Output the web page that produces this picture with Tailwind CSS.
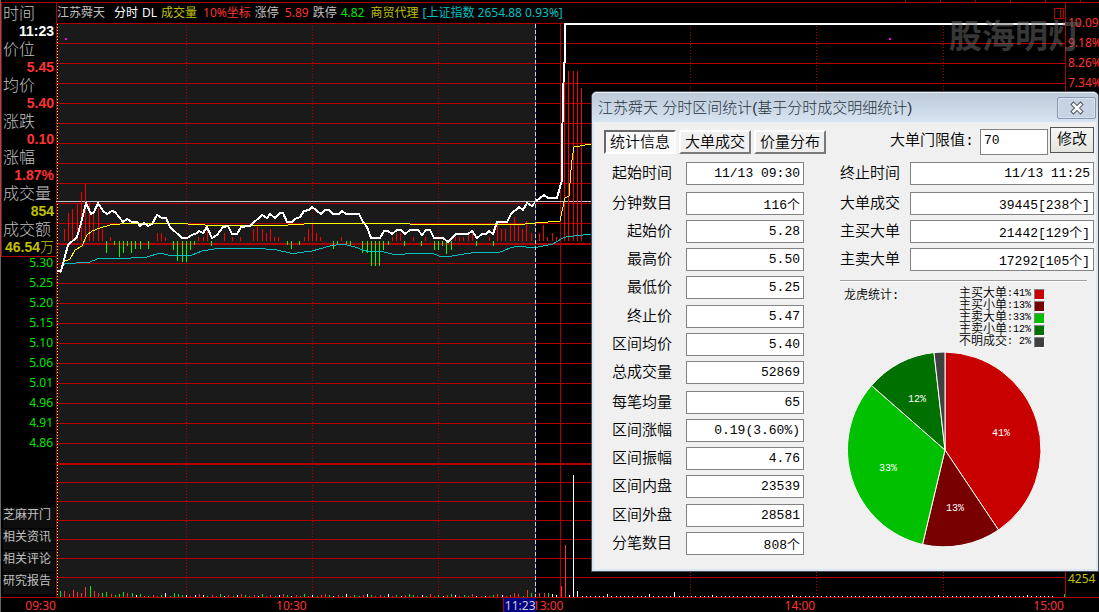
<!DOCTYPE html>
<html lang="zh-CN">
<head>
<meta charset="utf-8">
<title>江苏舜天 分时</title>
<script src="https://cdn.jsdelivr.net/npm/@tailwindcss/browser@4"></script>
</head>
<body class="relative flex min-h-screen flex-col overflow-hidden border-l border-[#666666] bg-black font-['Noto_Sans','Noto_Sans_CJK_SC',sans-serif] text-xs">

<div class="flex h-[3px] shrink-0 justify-end border-b border-[#b00000] pr-[18px]">
  <div class="flex h-[2px] gap-[34px]" aria-hidden="true">
    <i class="w-px bg-[#b00000]"></i><i class="w-px bg-[#b00000]"></i><i class="w-px bg-[#b00000]"></i><i class="w-px bg-[#b00000]"></i><i class="w-px bg-[#b00000]"></i><i class="w-px bg-[#b00000]"></i>
  </div>
</div>

<main class="flex flex-1">
  <aside class="flex w-[55px] shrink-0 flex-col">
    <dl class="-mr-px border-x border-b border-[#b00000] pt-px pr-0.5 pl-px text-[16px] leading-[18px] font-light text-[#c0c0c0] [&_dd]:text-right [&_dd]:font-['Liberation_Sans','Noto_Sans_CJK_SC',sans-serif] [&_dd]:text-[14px] [&_dd]:font-bold">
      <dt>时间</dt><dd class="text-white">11:23</dd>
      <dt>价位</dt><dd class="text-[#ff3232]">5.45</dd>
      <dt>均价</dt><dd class="text-[#ff3232]">5.40</dd>
      <dt>涨跌</dt><dd class="text-[#ff3232]">0.10</dd>
      <dt>涨幅</dt><dd class="text-[#ff3232]">1.87%</dd>
      <dt>成交量</dt><dd class="text-[#c0c000]">854</dd>
      <dt>成交额</dt><dd class="whitespace-nowrap text-[#c0c000]">46.54<span class="font-light">万</span></dd>
    </dl>
    <ul class="-mt-1 pr-[3px] text-right leading-5 text-[#00e600]">
      <li>5.30</li><li>5.25</li><li>5.20</li><li>5.15</li><li>5.10</li><li>5.06</li><li>5.01</li><li>4.96</li><li>4.91</li><li>4.86</li>
    </ul>
    <nav class="mt-auto flex flex-col gap-px pr-px pb-[3px] pl-0.5 text-[#c0c0c0] [&_a]:h-[21px] [&_a]:bg-[#0e0e0e] [&_a]:leading-4">
      <a href="#">芝麻开门</a><a href="#">相关资讯</a><a href="#">相关评论</a><a href="#">研究报告</a>
    </nav>
  </aside>

  <section class="flex min-w-0 flex-1 flex-col">
    <header class="flex h-5 items-center pr-px pl-px leading-5 whitespace-nowrap">
      <h1 class="mr-[9px] text-[#c0c0c0]">江苏舜天</h1>
      <div class="flex gap-1.5 [&>div]:flex [&>div]:gap-1">
        <div><span class="text-white">分时</span><span class="text-white">DL</span><span class="text-[#c0c000]">成交量</span></div>
        <div><span class="text-[#ff3232]">10%坐标</span><span class="text-[#c0c0c0]">涨停</span></div>
        <div><span class="text-[#ff3232]">5.89</span><span class="text-[#c0c0c0]">跌停</span><span class="text-[#00e600]">4.82</span></div>
        <div><span class="text-[#c0c000]">商贸代理</span><span class="text-[#00c0c0]">[上证指数 2654.88 0.93%]</span></div>
      </div>
      <svg class="ml-auto h-[11px] w-[10px]" viewBox="0 0 10 11" fill="none" stroke="#b00000" shape-rendering="crispEdges"><path d="M.5 .5h9v10h-9zM6.5 .5v10"/></svg>
    </header>
    <div class="min-h-0 flex-1">
      <svg class="block h-full w-full" viewBox="56 23 1009 574" preserveAspectRatio="none" fill="none" shape-rendering="crispEdges" role="img" aria-label="分时走势图">
        <rect x="57" y="23" width="478" height="574" fill="#1a1a1a"/>
        <path stroke="#b00000" d="M57 23.5H1065M57 43.5H1065M57 63.5H1065M57 83.5H1065M57 103.5H1065M57 123.5H1065M57 143.5H1065M57 163.5H1065M57 183.5H1065M57 203.5H1065M57 223.5H1065M57 263.5H1065M57 283.5H1065M57 303.5H1065M57 323.5H1065M57 343.5H1065M57 363.5H1065M57 383.5H1065M57 403.5H1065M57 423.5H1065M57 443.5H1065M57 482.5H1065M57 501.5H1065M57 520.5H1065M57 539.5H1065M57 558.5H1065M57 577.5H1065M560.5 23V597M56.5 23V597"/>
        <path stroke="#b00000" stroke-width="2" d="M57 244H1065M57 464H1065"/>
        <path stroke="#b00000" stroke-dasharray="1 2" d="M186.500 26V597M312.500 26V597M438.500 26V597M690.500 26V597M816.500 26V597M943.500 26V597"/>
        <path stroke="#ffff40" stroke-dasharray="1 2" d="M57.500 24V597"/>
        <path stroke="#c8c8c8" d="M56 201.5H1065"/>
        <g id="bars"></g>
        <polyline stroke="#00c0c0" points="62,265 67,263 72,264 80,262 90,262 97,259 117,258 125,259 137,257 147,257 160,253 168,255 192,255 202,251 220,248 242,249 254,248 277,250 290,253 297,253 312,251 330,246 343,244 355,247 363,250 370,252 380,251 392,254 405,254 413,253 432,253 439,256 452,256 477,252 498,253 510,248 518,246 533,248 553,244 563,238 566,237 591,234"/>
        <polyline stroke="#ffff00" points="60,273 63,262 70,259 75,250 82,246 87,235 92,231 100,228 110,225 125,223.500 180,223.500 213,225.500 280,225.500 312,223.500 400,223.500 420,224.500 520,224.500 536,223 560,221 562,211 565,198 569,196 571,170 572,160 574,147 591,144"/>
        <polyline stroke="#ffffff" stroke-width="2" stroke-linejoin="round" points="57,271 61,271 64,260 68,245 77,237 81,223 86,203 91,214 94,212 98,203 103,211 107,214 112,211 115,212 123,222 127,219 132,222 137,222 140,226 144,223 148,226 152,224 157,215 162,218 166,218 170,227 182,238 187,238 192,235 197,233 199,231 203,233 207,227 212,238 217,235 223,227 228,226 232,234 237,234 241,227 250,226 262,215 267,218 270,214 275,218 280,213 283,213 287,222 292,222 295,219 300,217 304,211 309,210 312,207 321,214 325,210 329,210 333,214 339,214 342,211 346,214 359,214 363,222 367,227 371,238 380,238 384,231 388,231 392,234 397,230 401,230 405,234 410,230 418,230 422,235 426,230 430,230 434,238 443,238 448,242 456,234 468,234 472,231 477,238 482,234 486,234 489,231 493,234 497,222 507,222 511,214 519,207 523,210 527,203 532,206 536,201 544,195 548,198 557,198 562,180 562,143 563,103 564,63 565,62 565,24 1065,24"/>
        <path stroke="#303090" d="M535.500 23V597"/>
        <path stroke="#d0d0d0" stroke-dasharray="4 2" d="M535.500 24V597"/>
        <path stroke="#ff00ff" stroke-width="2" d="M65 39H67M889 39H891"/>
      </svg>
    </div>
  </section>

  <aside class="flex w-[34px] shrink-0 flex-col overflow-hidden border-l border-[#b00000] pt-2.5 pb-2 pl-0.5 leading-5 text-[#ff3232]">
    <span>10.09%</span><span>9.18%</span><span>8.26%</span><span>7.34%</span>
    <span class="mt-auto text-[#c0c000]">4254</span>
  </aside>
</main>

<footer class="grid h-[15px] shrink-0 grid-cols-[55px_251fr_229fr_28fr_252fr_249fr_35px] border-t border-[#b00000] text-right leading-4 text-[#ff3232]">
  <span>09:30</span><span>10:30</span>
  <span class="ml-auto w-[33px] border-l border-[#b00000] bg-[#000080] text-[#d0d0d0]">11:23</span>
  <span class="flex justify-end overflow-hidden">13:00</span><span>14:00</span><span>15:00</span><span></span>
</footer>

<div class="pointer-events-none absolute top-4 right-[18px] text-[33px] leading-[40px] font-bold text-[#6e6e6e]/50" aria-hidden="true">股海明灯</div>

<section role="dialog" aria-labelledby="dlg" class="absolute top-[91px] right-0 w-[508px] rounded-t-md border border-[#4a4f55] bg-[#f0f0f0] font-['Liberation_Mono','Noto_Sans_CJK_SC',monospace] text-[15px] text-black">
  <div class="flex h-[30px] items-center rounded-t-[5px] border-t border-[#eef3f8] bg-linear-to-b from-[#bccad9] to-[#d7e4f2] pr-0.5 pl-1.5">
    <h2 id="dlg" class="font-['Liberation_Sans','Noto_Sans_CJK_SC',sans-serif] leading-5 font-light whitespace-nowrap text-[#27323c]">江苏舜天 分时区间统计(基于分时成交明细统计)</h2>
    <button aria-label="关闭" class="ml-auto flex h-[22px] w-[39px] items-center justify-center rounded-[2px] border border-[#8796b4] bg-[#c6d3e2] shadow-[inset_0_0_0_1px_#d7e2ee]">
      <svg class="h-[14px] w-[16px]" viewBox="0 0 16 14" stroke-linecap="square"><path d="M4.500 3.500 11.500 10.500M11.500 3.500 4.500 10.500" stroke="#4b5262" stroke-width="4.500"/><path d="M4.500 3.500 11.500 10.500M11.500 3.500 4.500 10.500" stroke="#fafafa" stroke-width="2.600"/></svg>
    </button>
  </div>

  <div class="h-[449px] border-x-2 border-b-2 border-[#dde7f3] pr-0.5 pl-2.5 font-[350]">
    <div class="flex items-start pt-[5px]">
      <div class="flex gap-[3px] pt-[3px] [&_button]:h-6 [&_button]:w-[72px] [&_button]:border-2 [&_button]:pt-0.5 [&_button]:leading-5">
        <button class="border-t-[#696969] border-r-white border-b-white border-l-[#696969] bg-[#f8f8f8]">统计信息</button>
        <button class="border-t-white border-r-[#7a7a7a] border-b-[#7a7a7a] border-l-white bg-[#f0f0f0]">大单成交</button>
        <button class="border-t-white border-r-[#7a7a7a] border-b-[#7a7a7a] border-l-white bg-[#f0f0f0]">价量分布</button>
      </div>
      <label for="limit" class="ml-auto pt-[5px] leading-5 whitespace-nowrap">大单门限值:</label>
      <div class="ml-1.5 pt-0.5"><input id="limit" value="70" class="block h-[26px] w-[68px] border border-[#828282] bg-white px-[3px] pb-[3px] text-[13px]"></div>
      <button class="ml-0.5 h-[26px] w-11 border border-[#555555] bg-linear-to-b from-[#f6f6f6] to-[#e4e4e0] pt-0.5 leading-5">修改</button>
    </div>

    <div class="mt-[7px] flex justify-between [&_input]:h-[23px] [&_input]:border [&_input]:border-[#828282] [&_input]:bg-white [&_input]:px-[3px] [&_input]:pb-px [&_input]:text-right [&_input]:text-[13px] [&_label]:h-[23px] [&_label]:text-right [&_label]:leading-[25px]">
      <div class="flex flex-col gap-1.5 [&_div]:grid [&_div]:grid-cols-[68px_118px] [&_div]:gap-x-3.5 [&_div]:gap-y-[5px]">
        <div class="mb-px"><label for="a1">起始时间</label><input id="a1" readonly value="11/13 09:30"></div>
        <div>
          <label for="a2">分钟数目</label><input id="a2" readonly value="116个">
          <label for="a3">起始价</label><input id="a3" readonly value="5.28">
          <label for="a4">最高价</label><input id="a4" readonly value="5.50">
          <label for="a5">最低价</label><input id="a5" readonly value="5.25">
        </div>
        <div class="mb-px">
          <label for="a6">终止价</label><input id="a6" readonly value="5.47">
          <label for="a7">区间均价</label><input id="a7" readonly value="5.40">
          <label for="a8">总成交量</label><input id="a8" readonly value="52869">
        </div>
        <div>
          <label for="a9">每笔均量</label><input id="a9" readonly value="65">
          <label for="a10">区间涨幅</label><input id="a10" readonly value="0.19(3.60%)">
          <label for="a11">区间振幅</label><input id="a11" readonly value="4.76">
          <label for="a12">区间内盘</label><input id="a12" readonly value="23539">
        </div>
        <div>
          <label for="a13">区间外盘</label><input id="a13" readonly value="28581">
          <label for="a14">分笔数目</label><input id="a14" readonly value="808个">
        </div>
      </div>

      <div class="w-[254px]">
        <div class="mb-[7px] grid grid-cols-[60px_1fr] gap-x-2.5"><label for="b1">终止时间</label><input id="b1" readonly value="11/13 11:25"></div>
        <div class="grid grid-cols-[60px_1fr] gap-x-2.5 gap-y-[5px]">
          <label for="b2">大单成交</label><input id="b2" readonly value="39445[238个]">
          <label for="b3">主买大单</label><input id="b3" readonly value="21442[129个]">
          <label for="b4">主卖大单</label><input id="b4" readonly value="17292[105个]">
        </div>
        <hr class="mt-[9px] mr-[7px] border-t border-[#a0a0a0] shadow-[0_1px_0_#fff]">
        <div class="mt-[7px] flex justify-between pr-[49px] pl-1 text-xs leading-3">
          <h3 class="pt-0.5">龙虎统计:</h3>
          <ul class="[&_b]:text-[10px] [&_b]:font-normal [&_b]:whitespace-pre [&_i]:ml-[3px] [&_i]:h-[11px] [&_i]:w-[11px] [&_i]:border [&_i]:border-t-[#808080] [&_i]:border-r-white [&_i]:border-b-white [&_i]:border-l-[#808080] [&_li]:flex [&_li]:h-3 [&_li]:items-center">
            <li>主买大单<b>:41%</b><i class="bg-[#c80000]"></i></li>
            <li>主买小单<b>:13%</b><i class="bg-[#780000]"></i></li>
            <li>主卖大单<b>:33%</b><i class="bg-[#00c000]"></i></li>
            <li>主卖小单<b>:12%</b><i class="bg-[#007000]"></i></li>
            <li>不明成交<b>: 2%</b><i class="bg-[#404040]"></i></li>
          </ul>
        </div>
        <svg class="mt-[3px] ml-[6px] h-[198px] w-[198px]" viewBox="846 351 198 198" role="img" aria-label="龙虎统计饼图">
          <g stroke="#ffffff" stroke-width="1">
            <path fill="#c80000" d="M945 450V352A97.500 97.500 0 0 1 998.500 530Z"/>
            <path fill="#780000" d="M945 450 998.500 530A97.500 97.500 0 0 1 922.500 544.500Z"/>
            <path fill="#00c000" d="M945 450 922.500 544.500A97.500 97.500 0 0 1 871.500 385.500Z"/>
            <path fill="#007000" d="M945 450 871.500 385.500A97.500 97.500 0 0 1 934 352.500Z"/>
            <path fill="#404040" d="M945 450 934 352.500A97.500 97.500 0 0 1 945 352Z"/>
          </g>
          <circle cx="944.500" cy="449.500" r="98" fill="none" stroke="#f0f0f0"/>
          <g fill="#ffffff" font-size="10" text-anchor="middle">
            <text x="1001" y="436">41%</text><text x="955" y="511">13%</text><text x="888" y="471">33%</text><text x="917" y="402">12%</text>
          </g>
        </svg>
      </div>
    </div>
  </div>
</section>

<script>
const BASE = 241, FLOOR = 597;
const RED = '#ff0000', GREEN = '#00ff00';
// Buying strength above the base line: [x, top]
const up = [[64,229],[68,213],[72,209],[77,204],[81,192],[85,184],[89,204],[93,212],[98,208],[102,229],[110,237],[157,233],[161,233],[165,237],[198,237],[203,237],[207,228],[224,233],[232,237],[240,237],[253,229],[257,225],[262,229],[266,233],[270,229],[274,237],[278,237],[304,237],[308,229],[312,224],[316,233],[320,237],[341,237],[392,237],[396,233],[400,233],[413,237],[425,237],[455,237],[459,237],[463,237],[468,233],[472,233],[489,237],[497,224],[501,229],[505,229],[510,225],[514,217],[518,225],[522,229],[526,221],[531,233],[539,233],[543,225],[547,237],[552,233],[556,237],[564,75],[568,71],[573,71],[577,71],[581,88]];
// Selling strength below the base line: [x, bottom]
const down = [[106,253],[114,245],[119,257],[123,253],[127,246],[131,253],[135,249],[140,249],[148,249],[173,250],[177,261],[182,262],[186,262],[190,250],[194,245],[211,246],[287,245],[291,249],[299,245],[333,249],[337,245],[346,245],[350,245],[362,253],[367,253],[371,266],[375,266],[379,266],[383,250],[388,245],[404,246],[421,246],[434,250],[438,250],[442,246],[446,254],[451,250],[476,246],[493,246]];
// Volume: [x, height, colour]
const vol = [[60,6,'g'],[64,6,'r'],[69,3,'r'],[73,7,'r'],[77,5,'r'],[81,4,'r'],[85,10,'r'],[90,11,'g'],[94,6,'r'],[98,4,'r'],[102,4,'g'],[106,5,'g'],[111,3,'r'],[115,2,'g'],[119,3,'g'],[123,5,'g'],[127,4,'r'],[132,4,'g'],[136,2,'w'],[140,3,'g'],[144,1,'r'],[148,1,'g'],[153,2,'r'],[157,1,'r'],[161,2,'g'],[165,4,'w'],[170,1,'g'],[174,4,'g'],[178,3,'g'],[182,2,'g'],[186,2,'w'],[190,1,'r'],[195,2,'w'],[481,1,'r'],[485,1,'w'],[489,1,'r'],[493,2,'g'],[497,3,'r'],[502,2,'w'],[506,1,'r'],[510,2,'r'],[514,4,'r'],[518,3,'r'],[523,1,'g'],[527,7,'r'],[531,4,'g'],[539,4,'r'],[544,4,'r'],[548,4,'g'],[552,3,'w'],[556,2,'w'],[561,11,'r'],[565,52,'r'],[569,2,'w'],[573,122,'w'],[577,6,'w'],[607,3,'w'],[649,3,'w'],[674,5,'w'],[712,2,'w'],[792,2,'w'],[998,2,'w'],[1027,2,'w'],[1064,3,'g']];
const tint = {r:'#ff3232', g:'#00e600', w:'#ffffff'};
const mid = 'rwgrrgwrgwrgg';
for (let i = 0; i < 67; i++) vol.push([Math.round(199 + i * 4.2), 1 + (i * 7 % 5 === 0 ? 2 : i % 2), mid[i % 13]]);
for (let i = 0; i < 113; i++) vol.push([Math.round(582 + i * 4.2), 1, 'w']);
const bar = (x, y, h, c) => `<rect x="${x}" y="${y}" width="1" height="${h}" fill="${c}"/>`;
document.getElementById('bars').innerHTML =
  up.map(([x, t]) => bar(x, t, BASE - t, RED)).join('') +
  down.map(([x, b]) => bar(x, BASE, b - BASE, GREEN)).join('') +
  vol.map(([x, h, c]) => bar(x, FLOOR - h, h, tint[c])).join('');
</script>
</body>
</html>
